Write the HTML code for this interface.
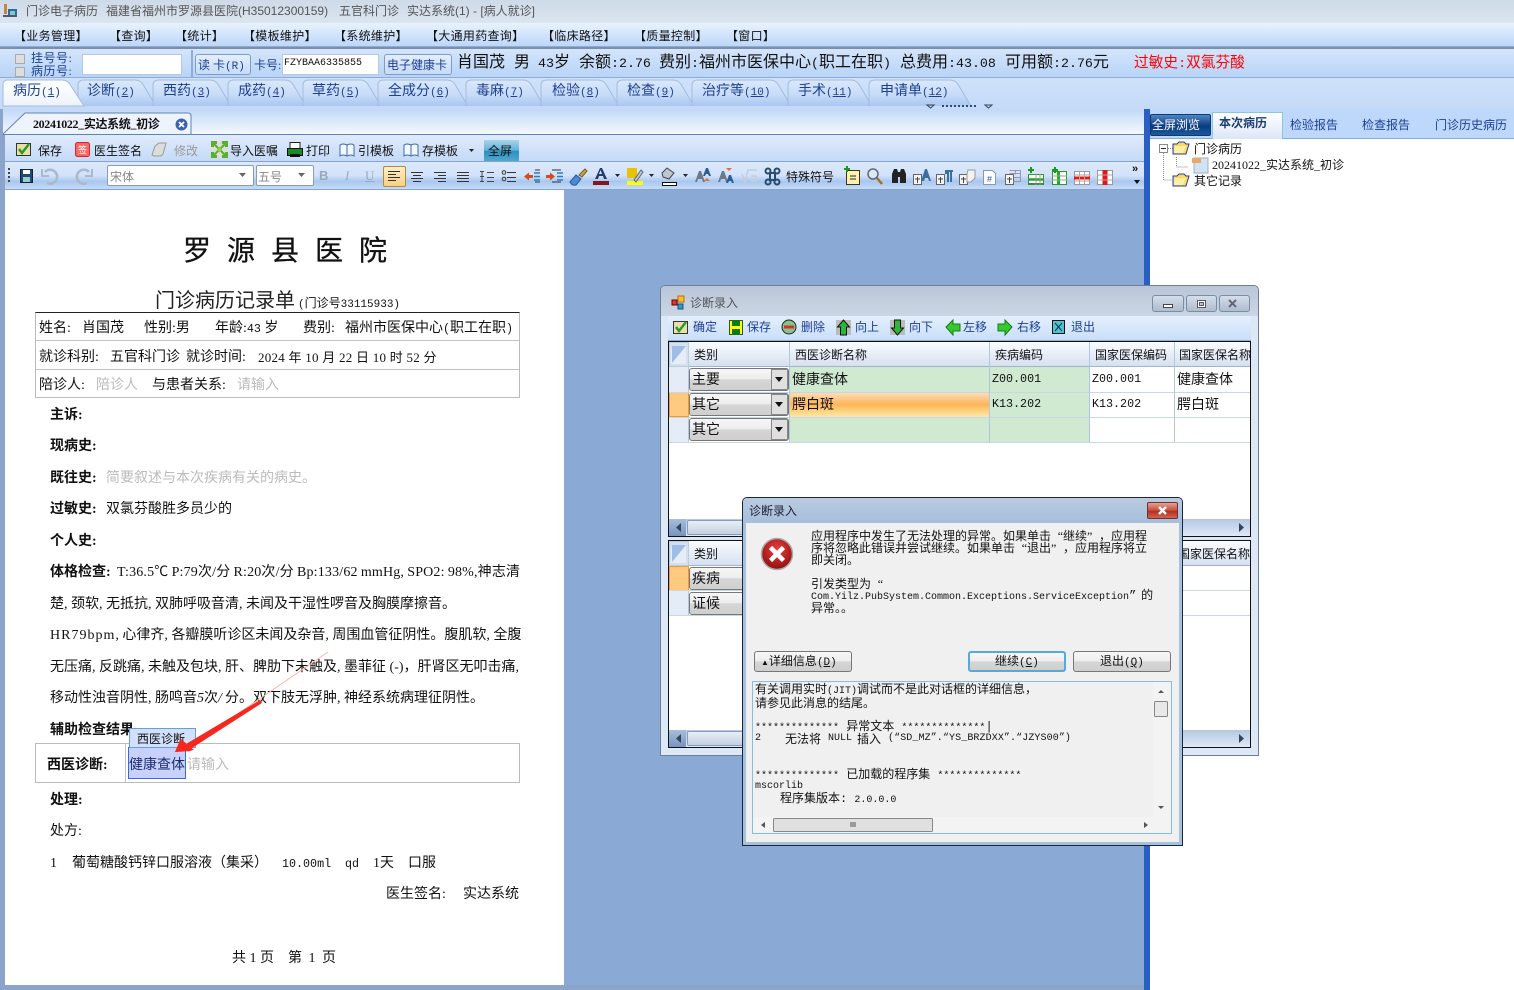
<!DOCTYPE html>
<html lang="zh"><head><meta charset="utf-8"><title>门诊电子病历</title>
<style>
html,body{margin:0;padding:0}
body{width:1514px;height:990px;position:relative;overflow:hidden;background:#8aaad5;font-family:"Liberation Serif","WenQuanYi Zen Hei","Noto Sans CJK SC",sans-serif;font-size:14px;color:#111}
div,span.a,svg.a{position:absolute}
.t{position:absolute;white-space:nowrap;line-height:16px;height:16px}
.s{font-size:12px}
.m{font-family:"Liberation Mono","WenQuanYi Zen Hei",monospace}
.p{font-family:"Liberation Mono",monospace;font-size:11px}
.p5{font-family:"Liberation Mono",monospace;font-size:10px}
.b{font-weight:bold}
.g{color:#bbb}
.bl{color:#1c3f94}
.c{display:inline-block;width:7px;text-align:left}
.q1{display:inline-block;width:12px;text-align:right}
.q2{display:inline-block;width:12px;text-align:left}
.btn{position:absolute;border:1px solid #7e9cc6;border-radius:3px;background:linear-gradient(#e4effd,#c6dcf8);box-sizing:border-box}
.wb{position:absolute;border:1px solid #777;border-radius:3px;background:linear-gradient(#f7f7f7 0,#ededed 48%,#d6d6d6 50%,#cfcfcf 100%);box-sizing:border-box}
.ln{position:absolute;background:#c3c3c3}
.cell{position:absolute;box-sizing:border-box}
</style></head><body>

<!-- title bar -->
<div style="left:0;top:0;width:1514px;height:23px;background:linear-gradient(#cfdae8,#dbe5f0)"></div>
<svg class="a" style="left:2px;top:3px" width="18" height="16"><rect x="6" y="6" width="9" height="8" fill="#2b6aa8"/><rect x="2" y="1" width="3" height="10" fill="#c9833a"/><rect x="8" y="8" width="5" height="4" fill="#7cc"/><rect x="1" y="12" width="14" height="2" fill="#556"/></svg>
<div class="t s" style="left:26px;top:3px;color:#555;font-family:'Liberation Sans','WenQuanYi Zen Hei',sans-serif">门诊电子病历</div>
<div class="t s" style="left:106px;top:3px;color:#555;font-family:'Liberation Sans','WenQuanYi Zen Hei',sans-serif">福建省福州市罗源县医院(H35012300159)</div>
<div class="t s" style="left:339px;top:3px;color:#555;font-family:'Liberation Sans','WenQuanYi Zen Hei',sans-serif">五官科门诊</div>
<div class="t s" style="left:407px;top:3px;color:#555;font-family:'Liberation Sans','WenQuanYi Zen Hei',sans-serif">实达系统(1) - [病人就诊]</div>

<!-- menu -->
<div style="left:0;top:23px;width:1514px;height:23px;background:linear-gradient(#e9f2fd,#bcd7f9);border-bottom:1px solid #8eadd6"></div>
<div class="t s" style="left:14px;top:28px;letter-spacing:.3px">【业务管理】</div>
<div class="t s" style="left:109px;top:28px;letter-spacing:.3px">【查询】</div>
<div class="t s" style="left:175px;top:28px;letter-spacing:.3px">【统计】</div>
<div class="t s" style="left:243px;top:28px;letter-spacing:.3px">【模板维护】</div>
<div class="t s" style="left:334px;top:28px;letter-spacing:.3px">【系统维护】</div>
<div class="t s" style="left:426px;top:28px;letter-spacing:.3px">【大通用药查询】</div>
<div class="t s" style="left:542px;top:28px;letter-spacing:.3px">【临床路径】</div>
<div class="t s" style="left:634px;top:28px;letter-spacing:.3px">【质量控制】</div>
<div class="t s" style="left:726px;top:28px;letter-spacing:.3px">【窗口】</div>

<!-- patient bar -->
<div style="left:0;top:47px;width:1514px;height:31px;background:linear-gradient(#d4e5fb,#b9d4f7);border-top:2px solid #7d8ea8;border-bottom:1px solid #8eadd6;box-sizing:border-box"></div>
<div class="wb" style="left:15px;top:54px;width:10px;height:10px;border-color:#aaa;background:#ddd;border-radius:0"></div>
<div class="wb" style="left:15px;top:67px;width:10px;height:10px;border-color:#aaa;background:#ddd;border-radius:0"></div>
<div class="t s bl" style="left:31px;top:50px;letter-spacing:.5px">挂号号:</div>
<div class="t s bl" style="left:31px;top:63px;letter-spacing:.5px">病历号:</div>
<div style="left:82px;top:54px;width:100px;height:21px;background:#fff;border:1px solid #b5c9e6;box-sizing:border-box"></div>
<div style="left:191px;top:50px;width:2px;height:27px;background:#8eadd6"></div>
<div class="btn" style="left:195px;top:54px;width:56px;height:21px"></div>
<div class="t s bl" style="left:198px;top:57px">读 卡<span class="p">(R)</span></div>
<div class="t s bl" style="left:254px;top:57px">卡号:</div>
<div style="left:282px;top:54px;width:97px;height:21px;background:#fff;border:1px solid #b5c9e6;box-sizing:border-box"></div>
<div class="t m" style="left:284px;top:56px;font-size:10px">FZYBAA6335855</div>
<div class="btn" style="left:384px;top:54px;width:68px;height:21px"></div>
<div class="t s bl" style="left:387px;top:57px">电子健康卡</div>
<div class="t" style="left:457px;top:55px;font-size:16px">肖国茂</div>
<div class="t" style="left:514px;top:55px;font-size:16px">男</div>
<div class="t" style="left:538px;top:55px;font-size:16px"><span class="m" style="font-size:13.3px">43</span>岁</div>
<div class="t" style="left:579px;top:55px;font-size:16px">余额<span class="m" style="font-size:13.3px">:2.76</span></div>
<div class="t" style="left:659px;top:55px;font-size:16px">费别<span class="m" style="font-size:13.3px">:</span>福州市医保中心<span class="m" style="font-size:13.3px">(</span>职工在职<span class="m" style="font-size:13.3px">)</span></div>
<div class="t" style="left:900px;top:55px;font-size:16px">总费用<span class="m" style="font-size:13.3px">:43.08</span></div>
<div class="t" style="left:1005px;top:55px;font-size:16px">可用额<span class="m" style="font-size:13.3px">:2.76</span>元</div>
<div class="t" style="left:1134px;top:55px;font-size:14.700px;color:#f00">过敏史<span class="m" style="font-size:13.3px">:</span>双氯芬酸</div>

<!-- top tabs -->
<div style="left:0;top:78px;width:1514px;height:31px;background:linear-gradient(#cfe2fb,#c4daf8)"></div>
<svg class="a" style="left:0;top:78px" width="1000" height="32">
<defs><linearGradient id="tg" x1="0" y1="0" x2="0" y2="1"><stop offset="0" stop-color="#dae9fc"/><stop offset=".55" stop-color="#c8dcf8"/><stop offset="1" stop-color="#a9c7f0"/></linearGradient>
<linearGradient id="ta" x1="0" y1="0" x2="0" y2="1"><stop offset="0" stop-color="#fff"/><stop offset="1" stop-color="#edf3fc"/></linearGradient></defs>
<g fill="url(#tg)" stroke="#a3bcdc">
<path d="M78 28V7Q78 2 84 2H135Q141 2 144 8L156 28"/>
<path d="M153 28V7Q153 2 159 2H210Q216 2 219 8L231 28"/>
<path d="M228 28V7Q228 2 234 2H285Q291 2 294 8L306 28"/>
<path d="M303 28V7Q303 2 309 2H360Q366 2 369 8L381 28"/>
<path d="M378 28V7Q378 2 384 2H447Q453 2 456 8L468 28"/>
<path d="M466 28V7Q466 2 472 2H523Q529 2 532 8L544 28"/>
<path d="M541 28V7Q541 2 547 2H598Q604 2 607 8L619 28"/>
<path d="M617 28V7Q617 2 623 2H673Q679 2 682 8L694 28"/>
<path d="M692 28V7Q692 2 698 2H770Q776 2 779 8L791 28"/>
<path d="M788 28V7Q788 2 794 2H851Q857 2 860 8L872 28"/>
<path d="M869 28V7Q869 2 875 2H950Q956 2 959 8L971 28"/>
</g>
<path d="M3 28V6Q3 2 8 2H62Q68 2 71 8L84 28Z" fill="url(#ta)" stroke="#a3bcdc"/>
<g fill="#2a4a80"><path d="M927 27h7l-3.500 3z" fill="none" stroke="#345"/><path d="M985 27h7l-3.500 3z" fill="none" stroke="#345"/>
<rect x="942" y="27" width="2" height="2"/><rect x="946" y="27" width="2" height="2"/><rect x="950" y="27" width="2" height="2"/><rect x="954" y="27" width="2" height="2"/><rect x="958" y="27" width="2" height="2"/><rect x="962" y="27" width="2" height="2"/><rect x="966" y="27" width="2" height="2"/><rect x="970" y="27" width="2" height="2"/><rect x="974" y="27" width="2" height="2"/></g></svg>
<div class="t bl" style="left:13px;top:84px">病历<span class="p">(<u>1</u>)</span></div>
<div class="t bl" style="left:87px;top:84px">诊断<span class="p">(<u>2</u>)</span></div>
<div class="t bl" style="left:163px;top:84px">西药<span class="p">(<u>3</u>)</span></div>
<div class="t bl" style="left:238px;top:84px">成药<span class="p">(<u>4</u>)</span></div>
<div class="t bl" style="left:312px;top:84px">草药<span class="p">(<u>5</u>)</span></div>
<div class="t bl" style="left:388px;top:84px">全成分<span class="p">(<u>6</u>)</span></div>
<div class="t bl" style="left:476px;top:84px">毒麻<span class="p">(<u>7</u>)</span></div>
<div class="t bl" style="left:552px;top:84px">检验<span class="p">(<u>8</u>)</span></div>
<div class="t bl" style="left:627px;top:84px">检查<span class="p">(<u>9</u>)</span></div>
<div class="t bl" style="left:702px;top:84px">治疗等<span class="p">(<u>10</u>)</span></div>
<div class="t bl" style="left:798px;top:84px">手术<span class="p">(<u>11</u>)</span></div>
<div class="t bl" style="left:880px;top:84px">申请单<span class="p">(<u>12</u>)</span></div>

<!-- left frame -->
<div style="left:0;top:109px;width:5px;height:881px;background:#8aa4ca"></div>
<div style="left:0;top:985px;width:1146px;height:5px;background:#8aa4ca"></div>
<div style="left:3px;top:109px;width:1141px;height:26px;background:linear-gradient(#c2d8f7,#f4f8fe);border-bottom:1px solid #5b84bd;box-sizing:border-box"></div>
<svg class="a" style="left:2px;top:111px" width="192" height="25"><path d="M1 23 23 2H186Q189 2 189 5V23" fill="#eef4fd" stroke="#5b84bd"/></svg>
<div class="t s b" style="left:33px;top:116px;letter-spacing:-.35px">20241022_实达系统_初诊</div>
<svg class="a" style="left:175px;top:118px" width="13" height="13"><circle cx="6.500" cy="6.500" r="6" fill="#3f62ad"/><path d="M4 4l5 5M9 4l-5 5" stroke="#fff" stroke-width="1.800"/></svg>

<!-- toolbar 1 -->
<div style="left:5px;top:135px;width:1139px;height:27px;background:linear-gradient(#e0ebfc,#c4daf8);border-bottom:1px solid #84a3cf;box-sizing:border-box"></div>
<svg class="a" style="left:16px;top:142px" width="16" height="15"><rect x="0.500" y="1.500" width="14" height="12" fill="#e8e0a8" stroke="#333"/><path d="M3 7l3 4 7-9" fill="none" stroke="#2a9a2a" stroke-width="2.500"/></svg>
<div class="t s" style="left:38px;top:143px">保存</div>
<svg class="a" style="left:75px;top:142px" width="15" height="15"><rect x="0.500" y=".5" width="14" height="14" rx="2" fill="#f46a6a" stroke="#d22"/><text x="7.500" y="11" font-size="9" text-anchor="middle" fill="#fff">签</text></svg>
<div class="t s" style="left:94px;top:143px">医生签名</div>
<svg class="a" style="left:151px;top:142px" width="16" height="15"><path d="M1 13 4 4 8 1H15L12 12 10 14H3Z" fill="#dcdcdc" stroke="#999"/></svg>
<div class="t s" style="left:174px;top:143px;color:#999">修改</div>
<svg class="a" style="left:211px;top:141px" width="17" height="17"><rect width="17" height="17" fill="#ddd"/><path d="M0 0h6v3H3v3H0zM17 0v6h-3V3h-3V0zM0 17v-6h3v3h3v3zM17 17h-6v-3h3v-3h3z" fill="#5bb02a"/><path d="M6 6h5v5H6z" fill="#8fd04a"/><path d="M3 3l4 4M14 3l-4 4M3 14l4-4M14 14l-4-4" stroke="#5bb02a" stroke-width="2"/></svg>
<div class="t s" style="left:230px;top:143px">导入医嘱</div>
<svg class="a" style="left:287px;top:142px" width="16" height="16"><rect x="3" y="0.500" width="10" height="7" fill="#fff" stroke="#222"/><rect x="0.500" y="6.500" width="15" height="7" fill="#1a8a2a" stroke="#111"/><rect x="3" y="12" width="10" height="3" fill="#111"/></svg>
<div class="t s" style="left:306px;top:143px">打印</div>
<svg class="a" style="left:339px;top:143px" width="16" height="14"><path d="M8 2Q4 0 1 2V13Q4 11 8 13Q12 11 15 13V2Q12 0 8 2V13" fill="#f4f8ff" stroke="#3a6ab0"/></svg>
<div class="t s" style="left:358px;top:143px">引模板</div>
<svg class="a" style="left:403px;top:143px" width="16" height="14"><path d="M8 2Q4 0 1 2V13Q4 11 8 13Q12 11 15 13V2Q12 0 8 2V13" fill="#f4f8ff" stroke="#3a6ab0"/></svg>
<div class="t s" style="left:422px;top:143px">存模板</div>
<svg class="a" style="left:468px;top:148px" width="7" height="5"><path d="M1 1h5L3.500 4z" fill="#222"/></svg>
<div style="left:484px;top:140px;width:35px;height:21px;background:linear-gradient(#a9d3ea 0,#5db2d8 50%,#2b8fbf 52%,#4fa8d0 100%)"></div>
<div class="t s" style="left:488px;top:143px;color:#111">全屏</div>

<!-- toolbar 2 -->
<div style="left:5px;top:162px;width:1139px;height:28px;background:linear-gradient(#dce9fb 0,#d2e2f9 50%,#a9c7ef 72%,#c6dcf8 100%);border-bottom:1px solid #84a3cf;box-sizing:border-box"></div>
<svg class="a" style="left:8px;top:165px" width="1130" height="24">
<g fill="#444"><rect x="0" y="3" width="2" height="2"/><rect x="0" y="7" width="2" height="2"/><rect x="0" y="11" width="2" height="2"/><rect x="0" y="15" width="2" height="2"/></g>
<rect x="12.500" y="4.500" width="12" height="13" fill="#1f4a78" stroke="#123"/><rect x="15" y="5" width="7" height="4" fill="#fff"/><rect x="15" y="12" width="7" height="5" fill="#9cc"/>
<path d="M37 7a7 7 0 1 1 2 11" fill="none" stroke="#aabacb" stroke-width="2.500"/><path d="M34 4v7h7" fill="none" stroke="#aabacb" stroke-width="2"/>
<path d="M81 7a7 7 0 1 0-2 11" fill="none" stroke="#aabacb" stroke-width="2.500"/><path d="M84 4v7h-7" fill="none" stroke="#aabacb" stroke-width="2"/>
<g fill="none" stroke="#333">
<path d="M403 7.500h12M405 10.500h8M403 13.500h12M405 16.500h8"/>
<path d="M426 7.500h12M430 10.500h8M426 13.500h12M430 16.500h8"/>
<path d="M449 7.500h12M449 10.500h12M449 13.500h12M449 16.500h12"/>
<path d="M472 6.500h4M472 11.500h4M472 16.500h4M474 6v11M479 7.500h7M479 12.500h7M479 16.500h7" stroke="#445"/>
<path d="M499 7.500h9M499 12.500h9M499 16.500h9"/><circle cx="496" cy="7.500" r="1.800"/><circle cx="496" cy="14" r="1.800"/>
<path d="M527 5h5M527 17h5M544 5h9M544 17h9" stroke="#333"/>
</g>
<path d="M526 8h6M526 11.500h6M526 15h6M549 8h6M549 11.500h6M549 15h6" stroke="#2a7ac8" stroke-width="1.500"/>
<path d="M516 11.500l5-4v2.500h4v3h-4v2.500zM547 11.500l-5-4v2.500h-4v3h4v2.500z" fill="#d8491b"/>
<path d="M562 17l6-7 5 4-5 6q-4 1-6-3z" fill="#4d8ad5" stroke="#2a5a9a"/><path d="M571 10l6-6 2 2-5 6z" fill="#c8a24a" stroke="#7a6020"/>
<path d="M587 14l5-11h2l5 11h-3l-1-3h-4l-1 3zM591 9h3l-1.500-4z" fill="#1e3d72"/><rect x="585" y="16" width="16" height="4" fill="#8c1414"/>
<path d="M607 9h5l-2.500 3z" fill="#222"/>
<rect x="619" y="16" width="16" height="4" fill="#ff0"/><rect x="619" y="3" width="10" height="10" fill="#e8c400"/><path d="M626 15l7-10 2 2-7 10z" fill="#b9c9d9" stroke="#667"/>
<path d="M641 9h5l-2.500 3z" fill="#222"/>
<path d="M654 8l5-5 7 5-5 6-6-2z" fill="#c0c6cc" stroke="#445"/><rect x="654.500" y="17.500" width="14" height="3" fill="#fff" stroke="#111"/>
<path d="M675 9h5l-2.500 3z" fill="#222"/>
<path d="M687 17l4-11h2l4 11h-2l-1-3h-4l-1 3z" fill="#6b7a8a"/><path d="M695 11l3-8h2l3 8h-2l-1-2h-2l-1 2z" fill="#2d5f94"/><path d="M696 16l3-3 3 3z" fill="#e0703a"/>
<path d="M710 17l4-11h2l4 11h-2l-1-3h-4l-1 3z" fill="#6b7a8a"/><path d="M718 18l3-8h2l3 8h-2l-1-2h-2l-1 2z" fill="#2d5f94"/><path d="M718 3l3 3 3-3z" fill="#e0703a"/>
<path d="M734 9l3 8 3-12h9M742 16h6v-5h-5" fill="none" stroke="#c4ced8" stroke-width="1.500"/>
<g fill="none" stroke="#2a4a70" stroke-width="2"><rect x="762" y="8" width="5" height="7"/><circle cx="760" cy="6" r="2.500"/><circle cx="769" cy="6" r="2.500"/><circle cx="760" cy="17" r="2.500"/><circle cx="769" cy="17" r="2.500"/></g>
<rect x="838.500" y="5.500" width="13" height="14" fill="#fff2a8" stroke="#333"/><path d="M836 4h6M839 1v6" stroke="#1a9a1a" stroke-width="2"/><path d="M842 11h6M842 14h6" stroke="#223"/>
<circle cx="865" cy="9" r="5" fill="#dbe8f6" stroke="#667" stroke-width="1.500"/><path d="M869 13l5 6" stroke="#a07028" stroke-width="2.500"/>
<path d="M884 9l2-5h3l1 3h2l1-3h3l2 5v9h-6v-6h-2v6h-6z" fill="#222"/>
<g fill="#f4f4f4" stroke="#666"><rect x="905.500" y="9.500" width="8" height="10"/><rect x="928.500" y="9.500" width="8" height="10"/><rect x="951.500" y="9.500" width="8" height="10"/><rect x="997.500" y="9.500" width="8" height="10"/></g>
<g stroke="#444"><path d="M909.500 12v6M907 14h5M932.500 12v6M930 14h5M955.500 12v6M953 14h5M1001.500 12v6M999 14h5"/></g>
<path d="M913 16l4-12h2l4 12h-2l-1-3h-3l-1 3z" fill="#3a6ea5"/><path d="M937 5h8v2h-1v10h-2V7h-1v10h-2V9h-2z" fill="#3a6ea5"/>
<path d="M960 5h7v8l-4 4h-4V9z" fill="#f2f2f2" stroke="#999"/>
<path d="M975.500 5.500h9l3 3v11h-12z" fill="#fafcff" stroke="#8899aa"/><text x="981.500" y="17" font-size="9" text-anchor="middle" fill="#2a5aa0" font-family="Liberation Mono">#</text>
<g fill="none" stroke="#99a" ><path d="M1001.500 5.500h11v11h-7M1007.500 5.500v4M1001.500 8.500h11M1006 12.500h6"/></g>
<g fill="#fff" stroke="#2a9a2a"><rect x="1020.500" y="9.500" width="15" height="10"/><rect x="1044.500" y="6.500" width="14" height="13"/></g>
<path d="M1020 14.500h16" stroke="#2aa02a" stroke-width="2.500"/><path d="M1020 18.500h16" stroke="#666"/><path d="M1028 9v11M1032 9v11" stroke="#8a8" />
<path d="M1050.500 7v12" stroke="#1fb01f" stroke-width="3"/><path d="M1044 11h15M1044 15h15" stroke="#8a8"/>
<path d="M1020 5h6M1023 2v6M1044 5h6M1047 2v6" stroke="#1a9a1a" stroke-width="2"/>
<g fill="#fff" stroke="#999"><rect x="1066.500" y="6.500" width="15" height="13"/><rect x="1089.500" y="5.500" width="15" height="14"/></g>
<path d="M1066 13h16" stroke="#e01818" stroke-width="3"/><path d="M1097 5v15" stroke="#e01818" stroke-width="5"/><path d="M1071.500 7v12M1076.500 7v12M1066 10h15M1066 16h15M1089 10h15M1089 15h15" stroke="#aaa"/>
</svg>
<div style="left:107px;top:165px;width:147px;height:21px;background:#fff;border:1px solid #8a9bb4;border-radius:2px;box-sizing:border-box"></div>
<div class="t s" style="left:110px;top:169px;color:#888">宋体</div>
<div style="left:256px;top:165px;width:58px;height:21px;background:#fff;border:1px solid #8a9bb4;border-radius:2px;box-sizing:border-box"></div>
<div class="t s" style="left:258px;top:169px;color:#888">五号</div>
<svg class="a" style="left:238px;top:172px" width="10" height="6"><path d="M1 1h7L4.500 5z" fill="#666"/></svg>
<svg class="a" style="left:297px;top:172px" width="10" height="6"><path d="M1 1h7L4.500 5z" fill="#666"/></svg>
<div class="t b" style="left:319px;top:168px;font-size:13px;color:#9aaabb;font-family:'Liberation Sans',sans-serif">B</div>
<div class="t" style="left:345px;top:168px;font-size:13px;color:#9aaabb;font-style:italic">I</div>
<div class="t" style="left:365px;top:168px;font-size:13px;color:#9aaabb;text-decoration:underline">U</div>
<div style="left:383px;top:166px;width:23px;height:21px;background:linear-gradient(#fdeec4,#f7d083);border:1px solid #b58a3c;border-radius:2px;box-sizing:border-box"></div>
<svg class="a" style="left:387px;top:170px" width="15" height="12"><path d="M1 1.500h12M1 4.500h8M1 7.500h12M1 10.500h8" stroke="#333"/></svg>
<div class="t s" style="left:786px;top:169px">特殊符号</div>
<div class="t b" style="left:1132px;top:161px;font-size:11px;font-family:'Liberation Sans',sans-serif">»</div>
<svg class="a" style="left:1133px;top:179px" width="8" height="6"><path d="M1 1h6L4 5z" fill="#111"/></svg>

<!-- document -->
<div style="left:5px;top:190px;width:559px;height:795px;background:#fff"></div>
<div class="t" style="left:183px;top:236px;font-size:28px;line-height:32px;height:32px;letter-spacing:16px;color:#111;-webkit-text-stroke:.3px #111">罗源县医院</div>
<div class="t" style="left:155px;top:291px;font-size:20px;line-height:20px;height:20px;color:#222">门诊病历记录单</div>
<div class="t s" style="left:298px;top:295px"><span class="p">(</span>门诊号<span class="p">33115933)</span></div>
<div style="left:35px;top:312px;width:485px;height:86px;border:1px solid #bbb;border-top:1px solid #222;box-sizing:border-box"></div>
<div class="ln" style="left:36px;top:340px;width:483px;height:1px"></div>
<div class="ln" style="left:36px;top:369px;width:483px;height:1px"></div>
<div class="t" style="left:39px;top:321px">姓名:</div><div class="t" style="left:82px;top:321px">肖国茂</div>
<div class="t" style="left:144px;top:321px">性别:男</div>
<div class="t" style="left:215px;top:321px">年龄:<span class="m" style="font-size:11.700px">43</span> 岁</div>
<div class="t" style="left:303px;top:321px">费别:</div><div class="t" style="left:345px;top:321px">福州市医保中心<span class="m" style="font-size:11.700px">(</span>职工在职<span class="m" style="font-size:11.700px">)</span></div>
<div class="t" style="left:39px;top:350px">就诊科别:</div><div class="t" style="left:110px;top:350px">五官科门诊</div>
<div class="t" style="left:186px;top:350px">就诊时间:</div>
<div class="t" style="left:258px;top:350px;font-size:13px;letter-spacing:.25px">2024 年 10 月 22 日 10 时 52 分</div>
<div class="t" style="left:39px;top:378px">陪诊人:</div><div class="t g" style="left:96px;top:378px">陪诊人</div>
<div class="t" style="left:152px;top:378px">与患者关系:</div><div class="t g" style="left:237px;top:378px">请输入</div>
<div class="t b" style="left:50px;top:408px">主诉:</div>
<div class="t b" style="left:50px;top:439px">现病史:</div>
<div class="t b" style="left:50px;top:471px">既往史:</div><div class="t g" style="left:106px;top:471px">简要叙述与本次疾病有关的病史。</div>
<div class="t b" style="left:50px;top:502px">过敏史:</div><div class="t" style="left:106px;top:502px">双氯芬酸胜多员少的</div>
<div class="t b" style="left:50px;top:534px">个人史:</div>
<div class="t b" style="left:50px;top:565px">体格检查:</div>
<div class="t" style="left:117px;top:565px;word-spacing:-.5px;letter-spacing:.17px">T:36.5℃ P:79次/分 R:20次/分 Bp:133/62 mmHg, SPO2: 98%,神志清</div>
<div class="t" style="left:50px;top:597px">楚<i class="c">,</i>颈软<i class="c">,</i>无抵抗<i class="c">,</i>双肺呼吸音清<i class="c">,</i>未闻及干湿性啰音及胸膜摩擦音。</div>
<div class="t" style="left:50px;top:628px"><span style="letter-spacing:1px">HR79bpm</span><i class="c">,</i>心律齐<i class="c">,</i>各瓣膜听诊区未闻及杂音<i class="c">,</i>周围血管征阴性。腹肌软<i class="c">,</i>全腹</div>
<div class="t" style="left:50px;top:660px">无压痛<i class="c">,</i>反跳痛<i class="c">,</i>未触及包块<i class="c">,</i>肝、脾肋下未触及<i class="c">,</i>墨菲征 (-)，肝肾区无叩击痛<i class="c">,</i></div>
<div class="t" style="left:50px;top:691px">移动性浊音阴性<i class="c">,</i>肠鸣音<i class="c">5</i>次<i class="c">/</i>分。双下肢无浮肿<i class="c">,</i>神经系统病理征阴性。</div>
<div class="t b" style="left:50px;top:723px">辅助检查结果</div>
<div style="left:35px;top:743px;width:485px;height:40px;border:1px solid #bbb;box-sizing:border-box"></div>
<div class="ln" style="left:125px;top:744px;width:1px;height:38px"></div>
<div class="t b" style="left:47px;top:758px">西医诊断:</div>
<div style="left:128px;top:747px;width:58px;height:32px;background:#c7d1fb;border:1px solid #3d66e6;box-sizing:border-box"></div>
<div class="t" style="left:129px;top:758px;color:#1c2a70">健康查体</div>
<div class="t g" style="left:187px;top:758px">请输入</div>
<div style="left:129px;top:728px;width:67px;height:20px;background:#d2e1fb;border:1px solid #6b9be0;box-sizing:border-box"></div>
<div class="t s" style="left:137px;top:731px">西医诊断</div>
<div class="t b" style="left:50px;top:793px">处理:</div>
<div class="t" style="left:50px;top:824px">处方:</div>
<div class="t" style="left:50px;top:856px">1</div><div class="t" style="left:72px;top:856px">葡萄糖酸钙锌口服溶液（集采）</div>
<div class="t m" style="left:282px;top:856px;font-size:11.700px">10.00ml</div><div class="t m" style="left:345px;top:856px;font-size:11.700px">qd</div><div class="t" style="left:373px;top:856px">1天</div><div class="t" style="left:408px;top:856px">口服</div>
<div class="t" style="left:386px;top:887px">医生签名:</div><div class="t" style="left:463px;top:887px">实达系统</div>
<div class="t" style="left:232px;top:951px">共 1 页</div><div class="t" style="left:288px;top:951px">第 <span style="margin:0 3px">1</span> 页</div>

<!-- red arrow -->
<svg class="a" style="left:160px;top:640px" width="180" height="125"><path d="M168 12 60 86" stroke="#ffb0a8" stroke-width="1"/><path d="M15 112 20 100 26 104 100 60 102 63 32 108 30 110 32 111z" fill="#f5281e"/><path d="M15 112 21 99 34 110z" fill="#f5281e"/></svg>

<!-- right panel -->
<div style="left:1144px;top:109px;width:6px;height:881px;background:#2a5fc0"></div>
<div style="left:1150px;top:109px;width:364px;height:881px;background:#fff"></div>
<div style="left:1150px;top:109px;width:364px;height:30px;background:#bdd8fb;border-bottom:1px solid #7fb0d8;box-sizing:border-box"></div>
<div style="left:1150px;top:114px;width:61px;height:22px;background:linear-gradient(#4f86c4,#0d3a80 55%,#1a5aa0);border:1px solid #0e3a70;border-radius:2px;box-sizing:border-box"></div>
<div class="t s" style="left:1152px;top:117px;color:#fff">全屏浏览</div>
<div style="left:1212px;top:112px;width:71px;height:27px;background:linear-gradient(#fff,#dbe7f6);border:1px solid #8cc7d8;border-bottom:0;box-sizing:border-box"></div>
<div class="t s b" style="left:1219px;top:115px;color:#1c3f74">本次病历</div>
<div class="t s bl" style="left:1290px;top:117px">检验报告</div>
<div class="t s bl" style="left:1362px;top:117px">检查报告</div>
<div class="t s bl" style="left:1435px;top:117px">门诊历史病历</div>
<svg class="a" style="left:1155px;top:140px" width="70" height="52">
<rect x="4.500" y="4.500" width="8" height="8" fill="#fff" stroke="#889"/><path d="M6 8.500h5" stroke="#333"/>
<path d="M13 8.500h5M8.500 13v27h10M21.500 17v10h11" stroke="#888" stroke-dasharray="1 1" fill="none"/>
<path d="M18 4h4l2-2h5l2 2h3l-3 10H18z" fill="#ffd860" stroke="#1a3fb0"/><path d="M20 6h11l-3 7H19z" fill="#fff0a8"/>
<rect x="39" y="18" width="14" height="15" fill="#cfe3f6" stroke="#aab"/><rect x="37" y="18" width="9" height="5" fill="#e8a868"/>
<path d="M18 36h4l2-2h5l2 2h3l-3 10H18z" fill="#ffd860" stroke="#1a3fb0"/><path d="M20 38h11l-3 7H19z" fill="#fff0a8"/></svg>
<div class="t s" style="left:1194px;top:141px">门诊病历</div>
<div class="t s" style="left:1212px;top:157px">20241022_实达系统_初诊</div>
<div class="t s" style="left:1194px;top:173px">其它记录</div>

<!-- diagnosis window -->
<div style="left:660px;top:285px;width:599px;height:471px;background:#dce8f6;border:1px solid #6c7f96;border-radius:5px 5px 0 0;box-sizing:border-box"></div>
<div style="left:661px;top:286px;width:597px;height:30px;background:linear-gradient(#bac6d8,#cbd6e4);border-radius:4px 4px 0 0"></div>
<svg class="a" style="left:671px;top:295px" width="15" height="15"><rect x="7" y="1" width="6" height="6" fill="#fb3" stroke="#a70"/><rect x="1" y="5" width="5" height="5" fill="#d33" stroke="#700"/><rect x="7" y="9" width="5" height="5" fill="#39c" stroke="#157"/></svg>
<div class="t s" style="left:690px;top:295px;color:#555">诊断录入</div>
<div class="wb" style="left:1152px;top:295px;width:32px;height:17px;border-color:#7b8ca5;background:linear-gradient(#d4deea,#aebcd0)"></div>
<div class="wb" style="left:1186px;top:295px;width:31px;height:17px;border-color:#7b8ca5;background:linear-gradient(#d4deea,#aebcd0)"></div>
<div class="wb" style="left:1219px;top:295px;width:31px;height:17px;border-color:#7b8ca5;background:linear-gradient(#d4deea,#aebcd0)"></div>
<svg class="a" style="left:1152px;top:295px" width="98" height="17"><rect x="11.500" y="9.500" width="9" height="3" fill="#fff" stroke="#445"/><rect x="45.500" y="5.500" width="8" height="7" fill="#fff" stroke="#556"/><rect x="47.500" y="7.500" width="4" height="3" fill="#bac6d8" stroke="#556"/><path d="M77 5l7 7M84 5l-7 7" stroke="#667" stroke-width="2"/></svg>
<div style="left:668px;top:316px;width:583px;height:25px;background:linear-gradient(#e4effd,#c9dff9);border-bottom:1px solid #8eadd6;box-sizing:border-box"></div>
<svg class="a" style="left:672px;top:318px" width="430" height="20">
<rect x="1.500" y="3.500" width="14" height="12" fill="#e8e0a8" stroke="#333"/><path d="M4 9l3 4 7-9" fill="none" stroke="#2a9a2a" stroke-width="2.500"/>
<rect x="57.500" y="2.500" width="13" height="14" fill="#ff0" stroke="#353"/><rect x="60" y="2" width="8" height="6" fill="#171"/><rect x="60" y="11" width="8" height="6" fill="#171"/>
<circle cx="117" cy="9" r="7" fill="#8bc28a" stroke="#222"/><rect x="112" y="7.500" width="10" height="3" fill="#c33"/>
<rect x="164" y="2" width="15" height="15" fill="#bbb"/><path d="M171.500 2l6 7h-3v8h-6V9h-3z" fill="#2fb53a" stroke="#111"/>
<rect x="218" y="2" width="15" height="15" fill="#bbb"/><path d="M225.500 17l-6-7h3V2h6v8h3z" fill="#2fb53a" stroke="#111"/>
<path d="M274 9l7-7v4h7v7h-7v4z" fill="#35c92a" stroke="#1a7a1a"/><path d="M340 9l-7-7v4h-7v7h7v4z" fill="#35c92a" stroke="#1a7a1a"/>
<rect x="380.500" y="2.500" width="12" height="13" fill="#4bc6cc" stroke="#111"/><path d="M383 5l7 8M390 5l-7 8" stroke="#135"/></svg>
<div class="t s bl" style="left:693px;top:319px">确定</div>
<div class="t s bl" style="left:747px;top:319px">保存</div>
<div class="t s bl" style="left:801px;top:319px">删除</div>
<div class="t s bl" style="left:855px;top:319px">向上</div>
<div class="t s bl" style="left:909px;top:319px">向下</div>
<div class="t s bl" style="left:963px;top:319px">左移</div>
<div class="t s bl" style="left:1017px;top:319px">右移</div>
<div class="t s bl" style="left:1071px;top:319px">退出</div>

<!-- grid 1 -->
<div style="left:668px;top:341px;width:583px;height:196px;background:#fff;border:1px solid #111;box-sizing:border-box"></div>
<div style="left:669px;top:342px;width:581px;height:25px;background:linear-gradient(#fafcff,#d6e0f0);border-bottom:1px solid #9eb4d2;box-sizing:border-box"></div>
<svg class="a" style="left:669px;top:342px" width="20" height="25"><rect x=".5" y=".5" width="19" height="24" fill="#d4e0f0" stroke="#bcd"/><path d="M2 22V7h0L17 3v19z" fill="#e6edf6"/><path d="M3 21 17 4H3z" fill="#9dbce6"/></svg>
<div class="t s" style="left:694px;top:347px">类别</div>
<div class="t s" style="left:795px;top:347px">西医诊断名称</div>
<div class="t s" style="left:995px;top:347px">疾病编码</div>
<div class="t s" style="left:1095px;top:347px">国家医保编码</div>
<div style="left:1179px;top:347px;width:71px;overflow:hidden" class="t s">国家医保名称</div>
<div class="cell" style="left:669px;top:367px;width:20px;height:75px;background:#e4ecf7;border-right:1px solid #b4c6de"></div>
<div class="cell" style="left:669px;top:392px;width:20px;height:25px;background:#fdca7f;border:1px solid #f29a2e"></div>
<div class="cell" style="left:789px;top:367px;width:300px;height:25px;background:#cfead0"></div>
<div class="cell" style="left:789px;top:392px;width:200px;height:25px;background:linear-gradient(#fee0b8 0,#fdc583 30%,#fdb458 50%,#fdd27e 75%,#fee8a6 100%)"></div>
<div class="cell" style="left:989px;top:392px;width:100px;height:25px;background:#cfead0"></div>
<div class="cell" style="left:789px;top:417px;width:300px;height:25px;background:#cfead0"></div>
<div class="ln" style="left:669px;top:392px;width:581px;background:#c9d6e6;height:1px"></div>
<div class="ln" style="left:669px;top:417px;width:581px;background:#c9d6e6;height:1px"></div>
<div class="ln" style="left:669px;top:442px;width:581px;background:#c9d6e6;height:1px"></div>
<div class="ln" style="left:789px;top:342px;width:1px;height:100px;background:#b4c6de"></div>
<div class="ln" style="left:989px;top:342px;width:1px;height:100px;background:#b4c6de"></div>
<div class="ln" style="left:1089px;top:342px;width:1px;height:100px;background:#b4c6de"></div>
<div class="ln" style="left:1174px;top:342px;width:1px;height:100px;background:#b4c6de"></div>
<div class="wb" style="left:689px;top:368px;width:100px;height:23px"></div>
<div class="wb" style="left:689px;top:393px;width:100px;height:23px"></div>
<div class="wb" style="left:689px;top:418px;width:100px;height:23px"></div>
<svg class="a" style="left:771px;top:368px" width="18" height="73"><g fill="#e0e0e0" stroke="#888"><rect x=".5" y="1.500" width="16" height="20"/><rect x=".5" y="26.500" width="16" height="20"/><rect x=".5" y="51.500" width="16" height="20"/></g><path d="M4 9h8l-4 5zM4 34h8l-4 5zM4 59h8l-4 5z" fill="#111"/></svg>
<div class="t" style="left:692px;top:373px">主要</div>
<div class="t" style="left:692px;top:398px">其它</div>
<div class="t" style="left:692px;top:423px">其它</div>
<div class="t" style="left:792px;top:373px">健康查体</div>
<div class="t" style="left:792px;top:398px">腭白斑</div>
<div class="t m" style="left:992px;top:371px;font-size:11.700px">Z00.001</div>
<div class="t m" style="left:992px;top:396px;font-size:11.700px">K13.202</div>
<div class="t m" style="left:1092px;top:371px;font-size:11.700px">Z00.001</div>
<div class="t m" style="left:1092px;top:396px;font-size:11.700px">K13.202</div>
<div class="t" style="left:1177px;top:373px">健康查体</div>
<div class="t" style="left:1177px;top:398px">腭白斑</div>
<div style="left:669px;top:519px;width:581px;height:17px;background:linear-gradient(#b5c8e2,#dfe9f6);"></div>
<div style="left:669px;top:519px;width:17px;height:17px;background:linear-gradient(#a6bedd,#7894bf)"></div>
<div style="left:687px;top:520px;width:80px;height:15px;background:linear-gradient(#e8eef6,#c5d0de);border:1px solid #7f9dc6;box-sizing:border-box;border-radius:2px"></div>
<svg class="a" style="left:673px;top:522px" width="580" height="11"><path d="M8 1v9L3 5.500z" fill="#345"/><path d="M566 1v9l5-4.500z" fill="#345"/></svg>

<!-- grid 2 -->
<div style="left:668px;top:540px;width:583px;height:208px;background:#fff;border:1px solid #111;box-sizing:border-box"></div>
<div style="left:669px;top:541px;width:581px;height:25px;background:linear-gradient(#fafcff,#d6e0f0);border-bottom:1px solid #9eb4d2;box-sizing:border-box"></div>
<svg class="a" style="left:669px;top:541px" width="20" height="25"><rect x=".5" y=".5" width="19" height="24" fill="#d4e0f0" stroke="#bcd"/><path d="M2 22V7h0L17 3v19z" fill="#e6edf6"/><path d="M3 21 17 4H3z" fill="#9dbce6"/></svg>
<div class="t s" style="left:694px;top:546px">类别</div>
<div class="t s" style="left:1183px;top:546px;width:67px;overflow:hidden;direction:rtl">国家医保名称</div>
<div class="cell" style="left:669px;top:566px;width:20px;height:25px;background:#fdca7f;border:1px solid #f29a2e"></div>
<div class="cell" style="left:669px;top:591px;width:20px;height:25px;background:#e4ecf7;border-right:1px solid #b4c6de"></div>
<div class="wb" style="left:689px;top:567px;width:60px;height:23px"></div>
<div class="wb" style="left:689px;top:592px;width:60px;height:23px"></div>
<div class="t" style="left:692px;top:572px">疾病</div>
<div class="t" style="left:692px;top:597px">证候</div>
<div class="ln" style="left:669px;top:590px;width:581px;height:1px;background:#c9d6e6"></div>
<div class="ln" style="left:669px;top:615px;width:581px;height:1px;background:#c9d6e6"></div>
<div style="left:669px;top:730px;width:581px;height:17px;background:linear-gradient(#b5c8e2,#dfe9f6);"></div>
<div style="left:669px;top:730px;width:17px;height:17px;background:linear-gradient(#a6bedd,#7894bf)"></div>
<div style="left:687px;top:731px;width:80px;height:15px;background:linear-gradient(#e8eef6,#c5d0de);border:1px solid #7f9dc6;box-sizing:border-box;border-radius:2px"></div>
<svg class="a" style="left:673px;top:733px" width="580" height="11"><path d="M8 1v9L3 5.500z" fill="#345"/><path d="M566 1v9l5-4.500z" fill="#345"/></svg>

<!-- error dialog -->
<div style="left:742px;top:497px;width:441px;height:349px;background:#f0f0f0;border:1px solid #17263a;border-radius:5px 5px 0 0;box-sizing:border-box;box-shadow:inset 0 0 0 3px #a7c0dc"></div>
<div style="left:743px;top:498px;width:439px;height:25px;background:linear-gradient(#bacbe0,#a5bfdc);border-radius:4px 4px 0 0"></div>
<div class="t s" style="left:749px;top:503px;color:#223">诊断录入</div>
<div style="left:1147px;top:502px;width:31px;height:17px;background:linear-gradient(#e8a095,#c94a38 50%,#b43020 55%,#d06450);border:1px solid #6e3030;box-sizing:border-box;border-radius:2px"></div>
<svg class="a" style="left:1157px;top:505px" width="12" height="11"><path d="M2 2l7 7M9 2l-7 7" stroke="#fff" stroke-width="2.500"/></svg>
<svg class="a" style="left:760px;top:537px" width="34" height="34"><defs><radialGradient id="e" cx=".5" cy=".35" r=".7"><stop offset="0" stop-color="#e64040"/><stop offset="1" stop-color="#8c0a0a"/></radialGradient></defs><circle cx="17" cy="17" r="15.500" fill="url(#e)" stroke="#aaa" stroke-width="1.500"/><path d="M10.500 10.500l13 13M23.500 10.500l-13 13" stroke="#fff" stroke-width="4.500"/></svg>
<div class="t s" style="left:811px;top:530px;line-height:12px;height:36px">应用程序中发生了无法处理的异常。如果单击<span class="q1">“</span>继续<span class="q2">”</span>，应用程<br>序将忽略此错误并尝试继续。如果单击<span class="q1">“</span>退出<span class="q2">”</span>，应用程序将立<br>即关闭。</div>
<div class="t s" style="left:811px;top:578px;line-height:12px">引发类型为<span class="q1">“</span></div>
<div class="t m" style="left:811px;top:590px;font-size:10px;line-height:12px">Com.Yilz.PubSystem.Common.Exceptions.ServiceException<span class="q2" style="font-size:12px">”</span><span style="font-size:12px">的</span></div>
<div class="t s" style="left:811px;top:602px;line-height:12px">异常。。</div>
<div class="wb" style="left:754px;top:651px;width:98px;height:21px"></div>
<div class="t s" style="left:761px;top:653px"><span style="font-size:8px">▲</span>详细信息<span class="p">(<u>D</u>)</span></div>
<div class="wb" style="left:968px;top:651px;width:98px;height:21px;border:2px solid #58a8d8"></div>
<div class="t s" style="left:995px;top:653px">继续<span class="p">(<u>C</u>)</span></div>
<div class="wb" style="left:1073px;top:651px;width:98px;height:21px"></div>
<div class="t s" style="left:1100px;top:653px">退出<span class="p">(<u>Q</u>)</span></div>
<div style="left:752px;top:681px;width:420px;height:153px;background:#f0f0f0;border:1px solid #8cbdd8;box-sizing:border-box"></div>
<div class="t s" style="left:755px;top:684px;line-height:11.500px">有关调用实时<span class="p5">(JIT)</span>调试而不是此对话框的详细信息，<br>请参见此消息的结尾。</div>
<div class="t s m" style="left:755px;top:719px"><span style="font-size:10px">**************</span> 异常文本 <span style="font-size:10px">**************</span>|</div>
<div class="t m" style="left:755px;top:731px;font-size:10px">2</div>
<div class="t s" style="left:785px;top:731px">无法将</div>
<div class="t m" style="left:828px;top:731px;font-size:10px">NULL</div>
<div class="t s" style="left:857px;top:731px">插入</div>
<div class="t m" style="left:888px;top:731px;font-size:10px;letter-spacing:.1px">(“SD_MZ”.“YS_BRZDXX”.“JZYS00”)</div>
<div class="t s m" style="left:755px;top:767px"><span style="font-size:10px">**************</span> 已加载的程序集 <span style="font-size:10px">**************</span></div>
<div class="t m" style="left:755px;top:779px;font-size:10px">mscorlib</div>
<div class="t s m" style="left:780px;top:791px">程序集版本: <span style="font-size:10px">2.0.0.0</span></div>
<svg class="a" style="left:753px;top:682px" width="418" height="151">
<rect x="400" y="0" width="17" height="135" fill="#f3f3f3"/><rect x="0" y="135" width="417" height="15" fill="#f3f3f3"/>
<rect x="401.500" y="19.500" width="13" height="15" fill="#e8e8e8" stroke="#888" rx="1"/>
<rect x="20.500" y="136.500" width="159" height="13" fill="#e0e0e0" stroke="#888" rx="1"/>
<path d="M98 140v5M100 140v5M102 140v5" stroke="#555"/>
<path d="M408 8l-3 3h6zM408 127l-3-3h6zM8 143l4-3v6zM391 140l4 3-4 3z" fill="#555"/></svg>

</body></html>
